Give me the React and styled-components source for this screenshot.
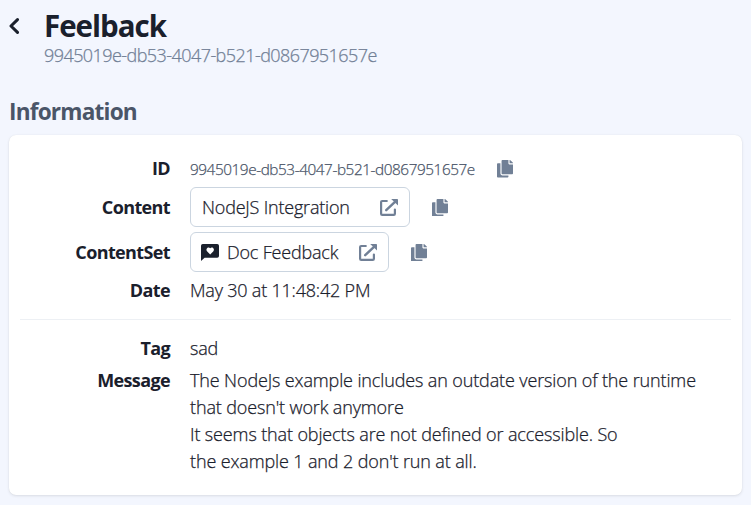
import React from "react";
import styled, { createGlobalStyle } from "styled-components";

const ID = "9945019e-db53-4047-b521-d0867951657e";

const CopyIcon = () => (
  <svg width="16" height="17.6" viewBox="0 0 448 512" fill="currentColor" preserveAspectRatio="none">
    <path d="M320 448v40c0 13.255-10.745 24-24 24H24c-13.255 0-24-10.745-24-24V120c0-13.255 10.745-24 24-24h72v296c0 30.879 25.121 56 56 56h168zm0-344V0H152c-13.255 0-24 10.745-24 24v368c0 13.255 10.745 24 24 24h272c13.255 0 24-10.745 24-24V128H344c-13.2 0-24-10.8-24-24zm120.971-31.029L375.029 7.029A24 24 0 0 0 358.059 0H352v96h96v-6.059a24 24 0 0 0-7.029-16.97z" />
  </svg>
);

const ExternalIcon = () => (
  <svg width="18" height="18" viewBox="0 0 18 18" fill="none">
    <path
      d="M6.8 3H2.2Q1.1 3 1.1 4.1V15.7Q1.1 16.8 2.2 16.8H13.8Q14.9 16.8 14.9 15.7V11.6"
      stroke="currentColor"
      strokeWidth="2.2"
      strokeLinecap="round"
    />
    <path d="M6.2 12.2L15 3.8" stroke="currentColor" strokeWidth="2.4" strokeLinecap="round" />
    <path d="M11.2 1H17.3Q18 1 18 1.7V7.6Z" fill="currentColor" />
  </svg>
);

const ChatHeartIcon = () => (
  <svg width="18" height="17" viewBox="0 0 18 17">
    <path d="M1.8 0H16.2Q18 0 18 1.8V11.9Q18 13.7 16.2 13.7H3.6L0 17V1.8Q0 0 1.8 0Z" fill="#1a202c" />
    <path
      d="M9.2 10.4L6 7.2C4.2 4.9 7.4 2.2 9.2 4.3C11 2.2 14.2 4.9 12.4 7.2Z"
      fill="#fff"
    />
  </svg>
);

const BackIcon = () => (
  <svg width="12" height="18" viewBox="0 0 12 18" fill="none">
    <path d="M8.5 2.6L2 9L8.5 15.4" stroke="#1a202c" strokeWidth="3" strokeLinecap="round" strokeLinejoin="round" />
  </svg>
);

const App = () => {
  return (
    <>
      <GlobalStyle />
      <Page>
        <Header>
          <BackButton aria-label="Back">
            <BackIcon />
          </BackButton>
          <div>
            <Title>Feelback</Title>
            <Subtitle>{ID}</Subtitle>
          </div>
        </Header>

        <SectionTitle>Information</SectionTitle>
        <Card>
          <Row>
            <Label>ID</Label>
            <Value $gap="22px">
              <Code>{ID}</Code>
              <CopyButton aria-label="Copy id">
                <CopyIcon />
              </CopyButton>
            </Value>
          </Row>
          <Row>
            <Label>Content</Label>
            <Value $gap="22px">
              <LinkButton $width="220px">
                <span>NodeJS Integration</span>
                <ExternalIcon />
              </LinkButton>
              <CopyButton aria-label="Copy content">
                <CopyIcon />
              </CopyButton>
            </Value>
          </Row>
          <Row>
            <Label>ContentSet</Label>
            <Value $gap="22px">
              <LinkButton $width="199px" $icon>
                <ChatHeartIcon />
                <span>Doc Feedback</span>
                <ExternalIcon />
              </LinkButton>
              <CopyButton aria-label="Copy content set">
                <CopyIcon />
              </CopyButton>
            </Value>
          </Row>
          <Row>
            <Label>Date</Label>
            <Value>May 30 at 11:48:42 PM</Value>
          </Row>

          <Divider />

          <Row>
            <Label>Tag</Label>
            <Value>sad</Value>
          </Row>
          <Row $top>
            <Label>Message</Label>
            <Message>
              The NodeJs example includes an outdate version of the runtime{"\n"}
              that doesn't work anymore{"\n"}
              It seems that objects are not defined or accessible. So{"\n"}
              the example 1 and 2 don't run at all.
            </Message>
          </Row>
        </Card>
      </Page>
    </>
  );
};

export default App;

const GlobalStyle = createGlobalStyle`
  * {
    box-sizing: border-box;
  }
  body {
    margin: 0;
    background: #f3f6fe;
    color: #1a202c;
    font-family: "Open Sans", "Noto Sans", sans-serif;
    font-size: 18px;
    line-height: 27px;
  }
  svg {
    display: block;
    flex-shrink: 0;
  }
  button {
    font: inherit;
    letter-spacing: inherit;
    color: inherit;
    cursor: pointer;
  }
`;

const Page = styled.div`
  height: 505px;
  padding: 8px 9px 0;
  overflow: hidden;
`;

const Header = styled.header`
  display: flex;
  height: 60px;
`;

const BackButton = styled.button`
  width: 35px;
  height: 36px;
  padding: 0;
  border: 0;
  background: none;
`;

const Title = styled.h1`
  margin: 0;
  font-size: 29.5px;
  font-weight: 700;
  line-height: 35px;
  letter-spacing: -1px;
`;

const Subtitle = styled.div`
  color: #718096;
  font-weight: 300;
  line-height: 24px;
  letter-spacing: -0.56px;
  -webkit-text-stroke: 0.25px;
`;

const SectionTitle = styled.h2`
  margin: 28px 0 7px;
  font-size: 22.6px;
  font-weight: 700;
  line-height: 32px;
  letter-spacing: -0.8px;
  color: #4a5568;
`;

const Card = styled.section`
  display: flex;
  flex-direction: column;
  gap: 5px;
  height: 360px;
  padding: 20px 11px;
  border-radius: 7px;
  background: #fff;
  box-shadow: 0 1px 3px rgba(0, 0, 0, 0.1), 0 0 1px rgba(0, 0, 0, 0.08);
`;

const Row = styled.div`
  display: flex;
  align-items: ${(p) => (p.$top ? "flex-start" : "center")};
  gap: 20px;
`;

const Label = styled.div`
  width: 150px;
  flex-shrink: 0;
  text-align: right;
  font-weight: 700;
  letter-spacing: -0.62px;
`;

const Value = styled.div`
  display: flex;
  align-items: center;
  gap: ${(p) => p.$gap || "0"};
  font-weight: 300;
  letter-spacing: -0.2px;
  white-space: nowrap;
  -webkit-text-stroke: 0.25px;
`;

const Message = styled.div`
  font-weight: 300;
  letter-spacing: -0.13px;
  white-space: pre;
  -webkit-text-stroke: 0.25px;
`;

const Code = styled.span`
  padding-top: 1px;
  margin-bottom: -1px;
  font-size: 15.3px;
  letter-spacing: -0.42px;
  color: #4a5568;
`;

const CopyButton = styled.button`
  margin-top: 1px;
  padding: 0;
  border: 0;
  background: none;
  color: #718096;
`;

const LinkButton = styled.button`
  display: flex;
  align-items: center;
  width: ${(p) => p.$width};
  height: 40px;
  padding: 0 11px 0 ${(p) => (p.$icon ? "10px" : "11px")};
  border: 1px solid #cbd5e0;
  border-radius: 6px;
  background: #fff;

  span {
    flex: 1;
    margin-left: ${(p) => (p.$icon ? "8px" : "0")};
    text-align: left;
  }
  svg:last-child {
    color: #718096;
  }
`;

const Divider = styled.hr`
  width: 100%;
  height: 1px;
  margin: 10px 0;
  border: 0;
  background: #edf0f4;
`;
